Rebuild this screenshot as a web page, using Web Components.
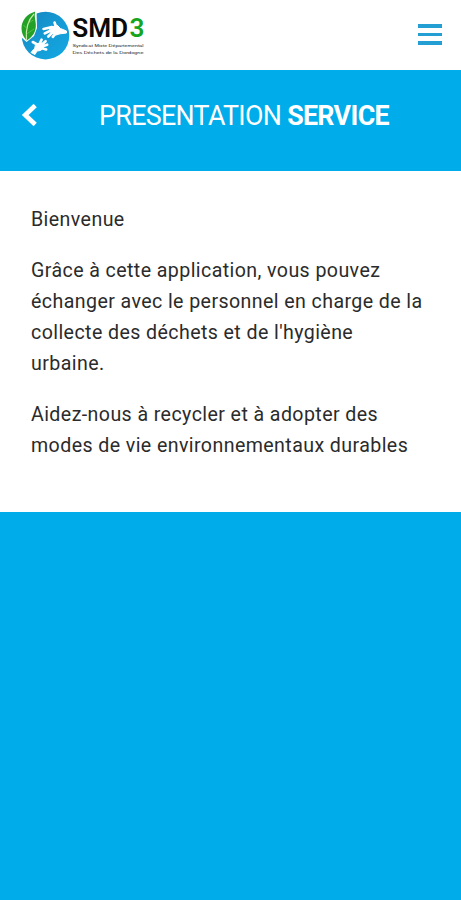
<!DOCTYPE html>
<html lang="fr">
<head>
<meta charset="utf-8">
<meta name="viewport" content="width=device-width, initial-scale=1">
<title>SMD3</title>
<style>
html, body {
  margin: 0;
  height: 100%;
}

body {
  --color-main: #00adea;
  --color-text: #2b2b2b;
  background-color: var(--color-main);
  font-family: Roboto, sans-serif;
}
</style>
</head>
<body>
<app-page>
  <app-header slot="header"></app-header>
  <page-title slot="title">PRESENTATION <b>SERVICE</b></page-title>
  <text-panel>
    <p>Bienvenue</p>
    <p>Grâce à cette application, vous pouvez échanger avec le personnel en charge de la collecte des déchets et de l'hygiène urbaine.</p>
    <p>Aidez-nous à recycler et à adopter des modes de vie environnementaux durables</p>
  </text-panel>
</app-page>
<script>
function define(name, html) {
  const template = document.createElement('template');
  template.innerHTML = html;

  window.customElements.define(name, class extends HTMLElement {
    constructor() {
      super();
      this.attachShadow({ mode: 'open' });
      this.shadowRoot.appendChild(template.content.cloneNode(true));
    }
  });
}

define('brand-logo', `
<style>
:host {
  display: block;
  width: 128px;
  height: 54px;
}

svg {
  display: block;
}

.name {
  font: 600 26.2px Roboto, sans-serif;
}

.baseline {
  font: 400 4.1px "Liberation Sans", sans-serif;
}
</style>
<svg width="128" height="54" viewBox="20 9 128 54" role="img" aria-label="SMD3">
  <defs>
    <linearGradient id="globe" x1="0" y1="0" x2="1" y2="1">
      <stop offset="0" stop-color="#1683bd"/>
      <stop offset=".45" stop-color="#1598d2"/>
      <stop offset="1" stop-color="#12a9e4"/>
    </linearGradient>
  </defs>
  <circle cx="45.5" cy="35.6" r="23.8" fill="url(#globe)"/>
  <path d="M20 36 L26.5 42 L34 36 L37 28 L36.5 10 L30 9 L20 18Z" fill="#fff"/>
  <path d="M35.2 11.4 C27 14 21.5 20 21.5 28.5 C21.5 33 23.5 37 26.6 40.5 C33.5 36.5 36.2 31 35.8 24 C35.5 19 34.1 16 35.2 11.4Z" fill="#23a127"/>
  <path d="M34 14 C28 20 25.5 28 26.4 40" fill="none" stroke="#c9ecaa" stroke-width="1.1"/>
  <path d="M27 29 L23.5 25 M26.6 34 L34 29 M28.5 23 L33.5 20" fill="none" stroke="#72c34e" stroke-width=".7"/>
  <!-- right hand, reaching in from the edge of the globe -->
  <g fill="none" stroke="#fff" stroke-linecap="round" stroke-linejoin="round">
    <path d="M52 27 L43.6 29 M52 30 L44.8 33.4 M53 32 L48.3 36.5 M56 33 L52.8 36.8 M56 27 L54.6 22.6" stroke-width="2.7"/>
    <path d="M49.5 28 L57 25 L60.5 28.5 L66.5 31 L66.5 33 L60 33.8 L56 35 L51 32.5Z" fill="#fff" stroke-width="1"/>
  </g>
  <!-- left hand, reaching up -->
  <g fill="none" stroke="#fff" stroke-linecap="round" stroke-linejoin="round">
    <path d="M38 45 L32.8 42 M39.5 44 L41.6 39.6 M41.5 45 L45.6 41.2 M42 46.5 L47.2 44.7 M41 48 L46.2 49.5" stroke-width="2.6"/>
    <path d="M36 44 L41.5 42.8 L43.5 48 L40.5 50.5 L37 51 L35 54.5 L31 52.5 L34.5 48.5Z" fill="#fff" stroke-width="1"/>
  </g>
  <g class="name">
    <text x="72.2" y="37" fill="#090909">SMD</text>
    <text x="129.4" y="37" fill="#16a51d">3</text>
  </g>
  <g class="baseline" fill="#222">
    <text x="72.5" y="47.4" textLength="71" lengthAdjust="spacingAndGlyphs">Syndicat Mixte Départemental</text>
    <text x="72.5" y="53.9" textLength="71" lengthAdjust="spacingAndGlyphs">Des Déchets de la Dordogne</text>
  </g>
</svg>
`);

define('menu-button', `
<style>
button {
  display: flex;
  flex-direction: column;
  gap: 5px;
  padding: 0;
  border: 0;
  background: none;
}

span {
  width: 24px;
  height: 3.5px;
  background-color: #249fd4;
}
</style>
<button aria-label="Menu"><span></span><span></span><span></span></button>
`);

define('app-header', `
<style>
:host {
  display: flex;
  align-items: center;
  justify-content: space-between;
  box-sizing: border-box;
  height: 70px;
  padding: 2px 19px 0 20px;
  background-color: #fff;
}

menu-button {
  display: block;
  margin-bottom: 3px;
}
</style>
<brand-logo></brand-logo>
<menu-button></menu-button>
`);

define('page-title', `
<style>
:host {
  display: grid;
  grid-template-columns: 72px 1fr 45px;
  box-sizing: border-box;
  height: 101px;
  padding-top: 25px;
  color: #fff;
}

button {
  display: block;
  height: 40px;
  padding: 0 0 0 21px;
  border: 0;
  background: none;
  text-align: left;
}

svg {
  display: block;
}

h1 {
  margin: 0;
  padding-top: 1px;
  font-size: 26.8px;
  line-height: 40px;
  font-weight: 400;
  letter-spacing: -.67px;
  text-align: center;
  white-space: nowrap;
}
</style>
<button aria-label="Retour">
  <svg width="18" height="26" viewBox="0 0 18 26">
    <path d="M14.2 3.5 L4.2 13 L14.2 22.5" fill="none" stroke="#fff" stroke-width="4.6"/>
  </svg>
</button>
<h1><slot></slot></h1>
`);

define('text-panel', `
<style>
:host {
  display: block;
  box-sizing: border-box;
  height: 341px;
  padding: 34px 31px;
  background-color: #fff;
  color: var(--color-text);
  font-size: 19.6px;
  line-height: 30.8px;
  letter-spacing: .41px;
}

::slotted(p) {
  margin: 0 0 20.5px;
}
</style>
<slot></slot>
`);

define('app-page', `
<style>
:host {
  display: block;
  min-height: 100%;
  background-color: var(--color-main);
}
</style>
<slot name="header"></slot>
<slot name="title"></slot>
<main><slot></slot></main>
`);
</script>
</body>
</html>
